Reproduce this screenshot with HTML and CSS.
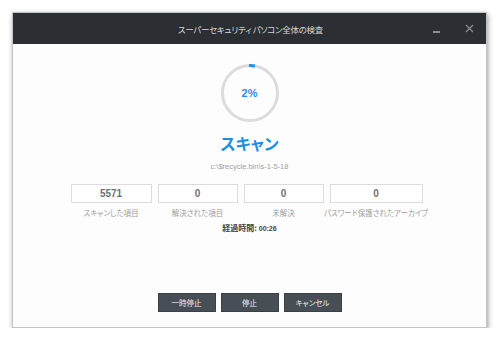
FILE: index.html
```html
<!DOCTYPE html>
<html lang="ja">
<head>
  <meta charset="UTF-8" />
  <title>スーパーセキュリティ パソコン全体の検査</title>
  <link rel="stylesheet" href="styles.css">
</head>
<body>
  <div class="window">
    <div class="titlebar">
      <span class="title">スーパーセキュリティ パソコン全体の検査</span>
      <div class="controls">
        <span class="min"></span>
        <svg class="close" width="9" height="9" viewBox="0 0 9 9">
          <path d="M1 1L8 8M8 1L1 8" stroke="#8a8e94" stroke-width="1.2" />
        </svg>
      </div>
    </div>

    <div class="content">
      <div class="progress">
        <svg width="58" height="58" viewBox="0 0 58 58">
          <circle cx="29" cy="29" r="27.5" fill="none" stroke="#dcdcdc" stroke-width="3" />
          <circle cx="29" cy="29" r="27.5" fill="none" stroke="#1e90f0" stroke-width="3"
                  stroke-dasharray="6 200" transform="rotate(-92 29 29)" />
        </svg>
        <span class="pct">2%</span>
      </div>
      <h1>スキャン</h1>
      <div class="path">c:\$recycle.bin\s-1-5-18</div>

      <div class="stats">
        <div class="stat"><div class="box">5571</div><div class="label">スキャンした項目</div></div>
        <div class="stat"><div class="box">0</div><div class="label">解決された項目</div></div>
        <div class="stat"><div class="box">0</div><div class="label">未解決</div></div>
        <div class="stat"><div class="box">0</div><div class="label">パスワード保護されたアーカイブ</div></div>
      </div>
      <div class="elapsed">経過時間: <span>00:26</span></div>

      <div class="buttons">
        <button>一時停止</button>
        <button>停止</button>
        <button>キャンセル</button>
      </div>
    </div>
  </div>
</body>
</html>
```

FILE: styles.css
```css
body {
  margin: 0;
  background: #ffffff;
  font-family: "Noto Sans CJK JP", "Liberation Sans", sans-serif;
  font-feature-settings: "palt";
}
.window {
  margin: 12px 0 0 12px;
  width: 473px;
  height: 314px;
  border: 1px solid #c4c4c4;
  background: #fdfdfd;
  box-shadow: 1px 2px 5px rgba(0, 0, 0, 0.4);
  display: flex;
  flex-direction: column;
}
.titlebar {
  height: 31px;
  background: #2b2e33;
  display: flex;
  align-items: center;
  justify-content: center;
  position: relative;
}
.title {
  color: #d4d6d8;
  font-size: 8.5px;
  letter-spacing: -0.3px;
  margin-left: 2px;
}
.controls {
  position: absolute;
  right: 0;
  top: 0;
  height: 31px;
  display: flex;
  align-items: center;
}
.min {
  width: 7px;
  height: 2px;
  background: #8a8e94;
  margin-top: 6px;
  margin-right: 25px;
}
.close {
  margin-right: 12px;
}
.content {
  flex: 1;
  display: flex;
  flex-direction: column;
  align-items: center;
  padding-top: 20px;
}
.progress {
  width: 58px;
  height: 58px;
  position: relative;
}
.progress svg {
  display: block;
}
.pct {
  position: absolute;
  inset: 0;
  display: flex;
  align-items: center;
  justify-content: center;
  color: #1e90f0;
  font-family: "Liberation Sans", sans-serif;
  font-weight: bold;
  font-size: 11px;
}
h1 {
  margin: 11px 0 0;
  font-size: 16px;
  line-height: 20px;
  font-weight: bold;
  color: #1a8de8;
}
.path {
  margin-top: 9px;
  font-family: "Liberation Sans", sans-serif;
  font-size: 7.5px;
  line-height: 10px;
  color: #a0a0a0;
}
.stats {
  margin-top: 12px;
  display: grid;
  grid-template-columns: 81px 80px 80px 93px;
  gap: 6px;
  margin-left: -6px;
}
.stat {
  display: flex;
  flex-direction: column;
  align-items: center;
}
.box {
  width: 100%;
  box-sizing: border-box;
  height: 19px;
  border: 1px solid #dcdcdc;
  background: #ffffff;
  display: flex;
  align-items: center;
  justify-content: center;
  font-family: "Liberation Sans", sans-serif;
  font-weight: bold;
  font-size: 10px;
  color: #707070;
}
.label {
  margin-top: 5px;
  font-size: 7.5px;
  line-height: 10px;
  color: #a0a0a0;
  white-space: nowrap;
}
.elapsed {
  margin-top: 5px;
  font-size: 8px;
  line-height: 10px;
  font-weight: bold;
  color: #444;
}
.elapsed span {
  font-family: "Liberation Sans", sans-serif;
  font-size: 7px;
}
.buttons {
  margin-top: auto;
  margin-bottom: 15px;
  display: flex;
  gap: 5px;
}
.buttons button {
  width: 58px;
  height: 19px;
  border: 1px solid #3a4046;
  background: #474e55;
  color: #f0f0f0;
  font-family: "Noto Sans CJK JP", sans-serif;
  font-feature-settings: "palt";
  font-size: 7.5px;
  padding: 0;
}
```
